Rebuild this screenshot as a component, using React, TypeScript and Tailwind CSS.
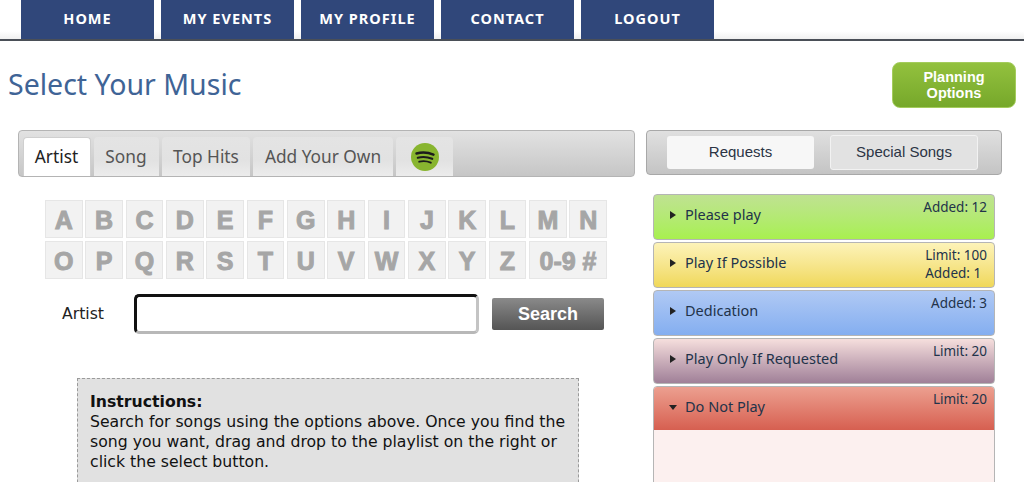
const navItems = ["HOME", "MY EVENTS", "MY PROFILE", "CONTACT", "LOGOUT"];
const row1 = ["A", "B", "C", "D", "E", "F", "G", "H", "I", "J", "K", "L", "M", "N"];
const row2 = ["O", "P", "Q", "R", "S", "T", "U", "V", "W", "X", "Y", "Z"];

const sections = [
  { title: "Please play", meta: ["Added: 12"], bg: "bg-gradient-to-b from-[#bfe291] to-[#a8f04e]" },
  { title: "Play If Possible", meta: ["Limit: 100", "Added: 1"], bg: "bg-gradient-to-b from-[#fdf3b8] to-[#f0d858]" },
  { title: "Dedication", meta: ["Added: 3"], bg: "bg-gradient-to-b from-[#b0c9f4] to-[#84aef0]" },
  { title: "Play Only If Requested", meta: ["Limit: 20"], bg: "bg-gradient-to-b from-[#f6dfdd] to-[#a08098]" },
];

const tabClass =
  "flex h-[39px] items-center justify-center rounded-t-[4px] bg-gradient-to-b from-[#e4e4e4] via-[#e2e2e2] via-60% to-[#ececec] text-[17.300px] text-[#555]";

function SpotifyIcon() {
  return (
    <svg viewBox="0 0 28 28" className="h-[28px] w-[28px]" aria-hidden="true">
      <circle cx="14" cy="14" r="14" fill="#88b52f" />
      <path d="M5.500 10.500c5.500-1.600 11.500-1.200 17 1.100" fill="none" stroke="#1c1c1c" strokeWidth="2.500" strokeLinecap="round" />
      <path d="M6.800 14.700c4.700-1.200 9.800-.8 14.400 1.100" fill="none" stroke="#1c1c1c" strokeWidth="2.200" strokeLinecap="round" />
      <path d="M8.200 18.700c3.700-.9 7.900-.6 11.600 1" fill="none" stroke="#1c1c1c" strokeWidth="1.900" strokeLinecap="round" />
    </svg>
  );
}

function LetterCell({ label, wide }: { label: string; wide?: boolean }) {
  return (
    <div
      className={`flex h-[38px] items-center justify-center border border-[#e6e6e6] bg-[#f2f2f2] pt-[3px] text-[25px] font-bold whitespace-nowrap text-[#a6a6a6] [-webkit-text-stroke:1px_#a6a6a6] [font-family:'Liberation_Sans',sans-serif] ${wide ? "col-span-2" : ""}`}
    >
      {label}
    </div>
  );
}

export default function App() {
  return (
    <div className="h-[482px] w-[1024px] overflow-hidden bg-white [font-family:'Noto_Sans',sans-serif]">
      <nav className="flex h-[41px] gap-[7px] border-b-2 border-[#4a4f57] bg-gradient-to-b from-white from-80% to-[#f0f0f0] pl-[21px]">
        {navItems.map((item) => (
          <div
            key={item}
            className="flex h-full w-[133px] items-center justify-center bg-[#30477a] pb-[1px] text-[14.500px] font-bold tracking-[1px] text-white"
          >
            {item}
          </div>
        ))}
      </nav>

      <div className="flex items-start justify-between pl-[8px] pr-[8px] pt-[21px]">
        <h1 className="mt-[2px] text-[28.500px] leading-[40px] text-[#3f6496]">Select Your Music</h1>
        <button
          type="button"
          className="h-[46px] w-[124px] rounded-[8px] border border-[#a4cc5c] bg-gradient-to-b from-[#93c13e] to-[#76a82a] text-[14.500px] leading-[16px] font-bold text-white [font-family:'Liberation_Sans',sans-serif]"
        >
          Planning
          <br />
          Options
        </button>
      </div>

      <div className="mt-[22px] flex items-start pl-[18px]">
        <div className="w-[617px] shrink-0">
          <div className="flex h-[47px] items-end gap-[3px] rounded-[4px] border border-[#b4b4b4] bg-gradient-to-b from-[#e2e2e2] to-[#c6c6c6] pl-[4px]">
            <div className="flex h-[39px] w-[68px] items-center justify-center rounded-t-[4px] border border-[#cfcfcf] border-b-0 bg-white pr-[1px] text-[17.300px] text-[#222]">
              Artist
            </div>
            <div className={`${tabClass} w-[65px] pr-[1px]`}>Song</div>
            <div className={`${tabClass} w-[88px]`}>Top Hits</div>
            <div className={`${tabClass} w-[140px]`}>Add Your Own</div>
            <div className={`${tabClass} w-[57px]`}>
              <SpotifyIcon />
            </div>
          </div>

          <div className="mt-[23px] ml-[27px] grid w-[562px] grid-cols-14 gap-x-[2.700px] gap-y-[3px]">
            {row1.map((l) => (
              <LetterCell key={l} label={l} />
            ))}
            {row2.map((l) => (
              <LetterCell key={l} label={l} />
            ))}
            <LetterCell label="0-9 #" wide />
          </div>

          <div className="mt-[15px] flex items-center">
            <span className="ml-[44px] w-[72px] text-[15.700px] text-[#222] [font-family:'DejaVu_Sans',sans-serif]">
              Artist
            </span>
            <input
              type="text"
              className="h-[40px] w-[345px] rounded-[5px] border-[3px] border-t-[#111] border-l-[#111] border-r-[#c4c4c4] border-b-[#b8b8b8] bg-white"
            />
            <button
              type="button"
              className="ml-[13px] h-[32px] w-[112px] rounded-[2px] bg-gradient-to-b from-[#8a8a8a] to-[#555] text-[18px] font-bold text-white [font-family:'Liberation_Sans',sans-serif]"
            >
              Search
            </button>
          </div>

          <div className="mt-[44px] ml-[59px] h-[140px] w-[502px] border border-dashed border-[#9a9a9a] bg-[#e1e1e1] px-[12px] pt-[13px] text-[15.700px] leading-[20px] text-[#111] [font-family:'DejaVu_Sans',sans-serif]">
            <div className="font-bold">Instructions:</div>
            Search for songs using the options above. Once you find the song you want, drag and drop to the playlist on
            the right or click the select button.
          </div>
        </div>

        <div className="ml-[11px] w-[356px] shrink-0">
          <div className="flex h-[45px] items-center gap-[16px] rounded-[4px] border border-[#a8a8a8] bg-gradient-to-b from-[#e0e0e0] to-[#c4c4c4] pl-[20px]">
            <div className="flex h-[33px] w-[147px] items-center justify-center rounded-[3px] bg-[#f7f7f7] text-[15px] text-[#2b3444] [font-family:'Liberation_Sans',sans-serif]">
              Requests
            </div>
            <div className="flex h-[35px] w-[148px] items-center justify-center rounded-[3px] border border-[#f2f2f2] bg-[#e2e2e2] text-[15px] text-[#2b3444] [font-family:'Liberation_Sans',sans-serif]">
              Special Songs
            </div>
          </div>

          <div className="mt-[19px] ml-[7px] flex w-[342px] flex-col gap-[2px] text-[#22334a]">
            {sections.map((s) => (
              <div
                key={s.title}
                className={`flex h-[46px] items-start justify-between rounded-[4px] border border-[#b5b5b5] pl-[16px] pr-[7px] ${s.bg}`}
              >
                <div className="flex items-center pt-[9px] text-[14.500px] leading-[20px]">
                  <span className="mr-[9px] mt-[2px] h-0 w-0 border-y-[4.500px] border-l-[6px] border-y-transparent border-l-[#222]" />
                  {s.title}
                </div>
                <div className="pt-[3px] text-[13.500px] leading-[18px]">
                  {s.meta.map((m) => (
                    <div key={m}>{m}</div>
                  ))}
                </div>
              </div>
            ))}
            <div className="overflow-hidden rounded-t-[4px] border border-[#b5b5b5]">
              <div className="flex h-[43px] items-start justify-between bg-gradient-to-b from-[#ec9f90] to-[#d65f50] pl-[15px] pr-[7px]">
                <div className="flex items-center pt-[9px] text-[14.500px] leading-[20px]">
                  <span className="mr-[8px] mt-[2px] h-0 w-0 border-x-[4.500px] border-t-[5px] border-x-transparent border-t-[#222]" />
                  Do Not Play
                </div>
                <div className="pt-[3px] text-[13.500px] leading-[18px]">Limit: 20</div>
              </div>
              <div className="h-[70px] bg-[#fcf0ef]" />
            </div>
          </div>
        </div>
      </div>
    </div>
  );
}
